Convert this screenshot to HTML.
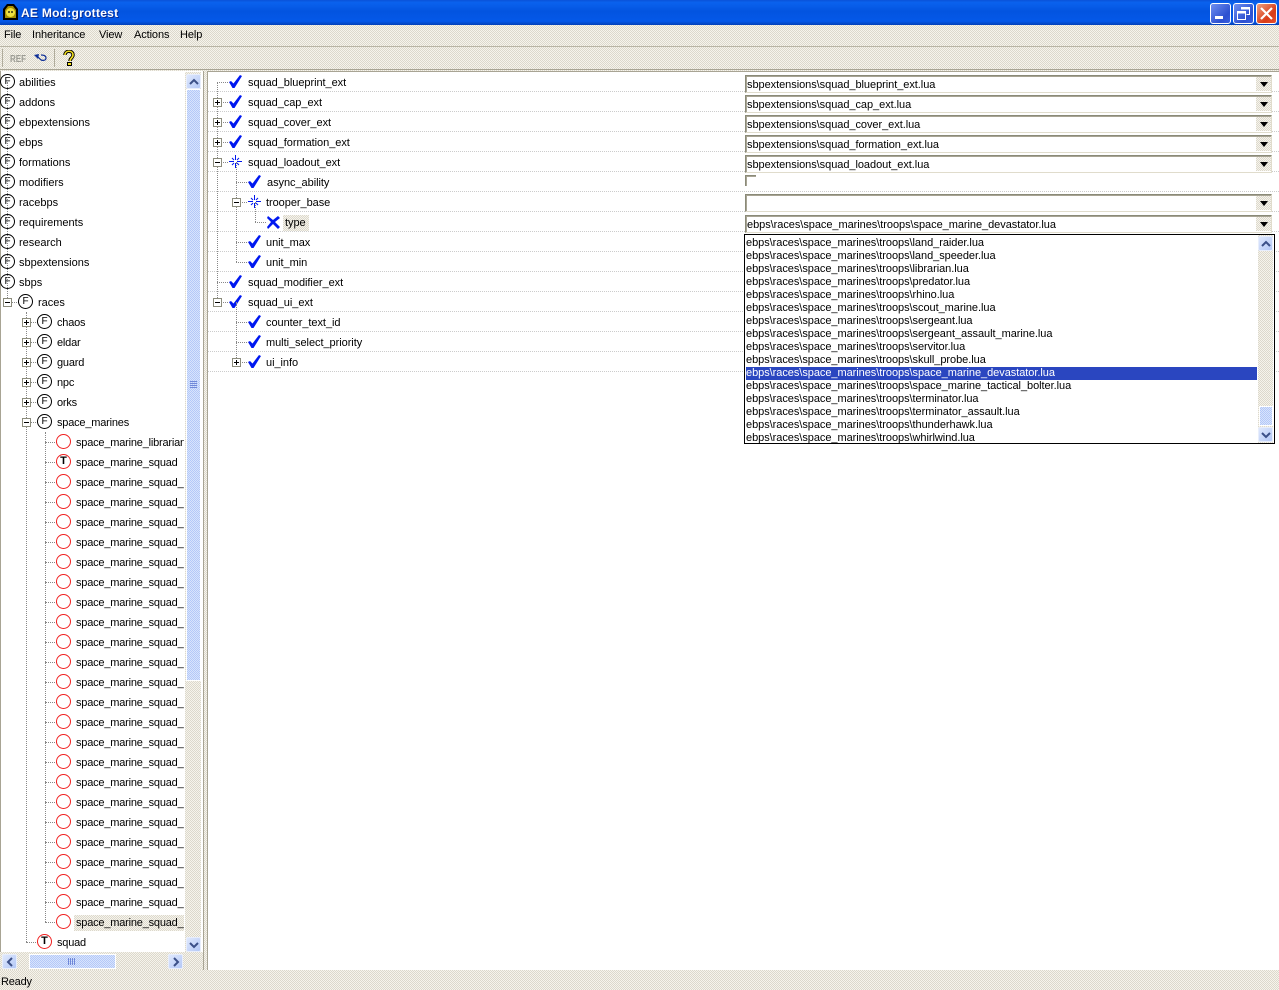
<!DOCTYPE html>
<html><head><meta charset="utf-8"><title>AE Mod:grottest</title>
<style>
html,body{margin:0;padding:0}
body{position:relative;width:1279px;height:990px;overflow:hidden;font:11px/13px "Liberation Sans",sans-serif;color:#000;background:#ece9d8}
.dith{background:repeating-conic-gradient(#dcd8cc 0 25%,#f6f4ec 0 50%) 0 0/2px 2px}
.a{position:absolute}
#title{left:0;top:0;width:1279px;height:25px;background:linear-gradient(#0a52d8 0,#0a62ee 10%,#0354e0 45%,#0458e8 85%,#0340b8 100%)}
#ttext{left:21px;top:6px;color:#fff;font:bold 12px/15px "Liberation Sans",sans-serif;letter-spacing:.27px;text-shadow:1px 1px 0 #0a2a90;white-space:nowrap}
.wb{top:3px;width:19px;height:19px;border:1px solid #fff;border-radius:3px;background:linear-gradient(135deg,#6f8ff0,#2c50d0 70%,#3a5fe0)}
.wb svg{position:absolute;left:0;top:0}
#menu span{position:absolute;top:29px;white-space:nowrap;line-height:13px;letter-spacing:-.1px}
.r{position:relative;height:20px;white-space:nowrap}
.r span{position:absolute;top:4px;line-height:14px}
.r i{position:absolute;top:2px;width:13px;height:13px;border:1px solid #000;border-radius:50%;background:#fff;font:normal 10px/13px "Liberation Sans",sans-serif;text-align:center}
.r i.o{border-color:#f02020}
.r i.t{border-color:#f02020;font-weight:bold;font-size:11px}
.r u{position:absolute;top:6px;width:7px;height:7px;border:1px solid #8c8c7c;background:#fff;text-decoration:none;z-index:2}
.r u:before{content:"";position:absolute;left:1px;top:3px;width:5px;height:1px;background:#000}
.r u.p:after{content:"";position:absolute;left:3px;top:1px;width:1px;height:5px;background:#000}
.r em{position:absolute;top:10px;height:0;border-top:1px dotted #888}
.v{position:absolute;width:0;border-left:1px dotted #888;z-index:1}
.l0 i{left:0}.l0 span{left:19px}
.l1 i{left:18px}.l1 span{left:38px}.l1 u{left:3px}.l1 em{left:7px;width:12px}
.l2 i{left:37px}.l2 span{left:57px;letter-spacing:-.2px}.l2 u{left:22px}.l2 em{left:26px;width:12px}
.l3 i{left:56px}.l3 span{left:76px;letter-spacing:-.2px}.l3 em{left:45px;width:12px}
.sel{background:repeating-conic-gradient(#dcd8cc 0 25%,#f6f4ec 0 50%) 0 0/2px 2px;padding:1px 3px 1px 2px;margin:-1px 0 0 -2px}
#rt .r{height:20px}
#rt .r:after{content:"";position:absolute;left:0;right:0;top:19px;border-top:1px dotted #ccc}
#rt svg{position:absolute;top:2px}
#rt .r span{top:4px;letter-spacing:-.05px}
.cb{position:absolute;left:745px;width:525px;height:16px;border:1px solid;border-color:#8a8a78 #e0dccc #e0dccc #8a8a78;box-shadow:inset 1px 1px 0 #a8a494;background:#fff}
.cb span{position:absolute;left:1px;top:3px;white-space:nowrap;line-height:13px;letter-spacing:-.05px}
.cb b{position:absolute;right:0;top:1px;width:15px;height:14px;background:repeating-conic-gradient(#dcd8cc 0 25%,#f6f4ec 0 50%) 0 0/2px 2px}
.cb b:after{content:"";position:absolute;left:4px;top:5px;border:4px solid transparent;border-top:5px solid #000;border-bottom:0}
#dd div{position:absolute;left:1px;width:511px;height:13px;line-height:13px;top:0;white-space:nowrap;letter-spacing:-.05px}
.sb{background:repeating-conic-gradient(#b4c8f8 0 25%,#d8e4fc 0 50%) 0 0/2px 2px;border:1px solid #fff;box-sizing:border-box}
.btn{background:linear-gradient(135deg,#dfe8fd,#b4c8f6);box-sizing:border-box;border:1px solid #e8eefc;border-radius:2px}
.btn svg{position:absolute;left:0;top:0}
</style></head><body>
<div class="a dith" style="left:0;top:25px;width:1279px;height:965px"></div>

<div id="title" class="a"></div>
<svg class="a" style="left:2px;top:3px" width="17" height="18" viewBox="0 0 17 18"><path d="M1 17V6L5 1h7l4 5v11z" fill="#000"/><path d="M3 15V7l3-4h5l3 4v8z" fill="#a89000"/><circle cx="8.500" cy="9.500" r="4.500" fill="#f0e040"/><circle cx="7" cy="9" r=".9" fill="#000"/><circle cx="10" cy="9" r=".9" fill="#000"/></svg>
<div id="ttext" class="a">AE Mod:grottest</div>
<div class="a wb" style="left:1210px"><svg width="19" height="19"><rect x="4" y="12" width="8" height="3" fill="#fff"/></svg></div>
<div class="a wb" style="left:1233px"><svg width="19" height="19" fill="none" stroke="#fff" stroke-width="1"><path d="M7.500 5.500V3.500h8v7h-3"/><path d="M7.500 4.500h8" stroke-width="2"/><rect x="3.500" y="7.500" width="8" height="8"/><path d="M3.500 8.500h8" stroke-width="2"/></svg></div>
<div class="a wb" style="left:1256px;background:linear-gradient(135deg,#f0a080,#d83c18 65%,#e85030)"><svg width="19" height="19" stroke="#fff" stroke-width="2.200"><path d="M4 4l11 11M15 4L4 15"/></svg></div>

<div id="menu">
<span style="left:4px">File</span><span style="left:32px">Inheritance</span><span style="left:99px">View</span><span style="left:134px">Actions</span><span style="left:180px">Help</span>
</div>
<div class="a" style="left:0;top:46px;width:1279px;height:1px;background:#b8b4a4"></div>
<div class="a" style="left:2px;top:49px;width:1px;height:18px;background:#b0ac9c"></div>
<div class="a" style="left:10px;top:53px;font:bold 10px/13px 'Liberation Sans',sans-serif;color:#9c9c94;transform:scaleX(.8);transform-origin:0 0">REF</div>
<svg class="a" style="left:33px;top:52px" width="15" height="13" fill="none"><path d="M1 3l5-1-1 5z" fill="#103098"/><path d="M4 4l4 4M8 3c3 0 5 1 5 3s-2 3-5 2" stroke="#103098" stroke-width="1.200"/></svg>
<div class="a" style="left:54px;top:49px;width:1px;height:18px;background:#b0ac9c"></div>
<svg class="a" style="left:62px;top:50px" width="14" height="16"><path d="M3 5c0-5 8-5 8 0 0 3-3 3-3 6" fill="none" stroke="#000" stroke-width="3.400"/><path d="M3 5c0-5 8-5 8 0 0 3-3 3-3 6" fill="none" stroke="#f4e020" stroke-width="1.600"/><rect x="5.500" y="12.500" width="4" height="3" fill="#f4e020" stroke="#000"/></svg>
<div class="a" style="left:0;top:69px;width:1279px;height:1px;background:#a8a494"></div>

<!-- left panel -->
<div class="a" style="left:0;top:71px;width:204px;height:899px;background:#fff;border-left:1px solid #a8a494;box-sizing:border-box"></div>
<div class="a" style="left:203px;top:71px;width:1px;height:899px;background:#a8a494"></div>
<div id="lt" class="a" style="left:0;top:72px;width:184px;height:880px;overflow:hidden">
<div class="v" style="left:7px;top:10px;height:220px"></div>
<div class="v" style="left:26px;top:240px;height:630px"></div>
<div class="v" style="left:45px;top:360px;height:490px"></div>
<div class="r l0"><i>F</i><span>abilities</span></div>
<div class="r l0"><i>F</i><span>addons</span></div>
<div class="r l0"><i>F</i><span>ebpextensions</span></div>
<div class="r l0"><i>F</i><span>ebps</span></div>
<div class="r l0"><i>F</i><span>formations</span></div>
<div class="r l0"><i>F</i><span>modifiers</span></div>
<div class="r l0"><i>F</i><span>racebps</span></div>
<div class="r l0"><i>F</i><span>requirements</span></div>
<div class="r l0"><i>F</i><span>research</span></div>
<div class="r l0"><i>F</i><span>sbpextensions</span></div>
<div class="r l0"><i>F</i><span>sbps</span></div>
<div class="r l1"><u></u><em></em><i>F</i><span>races</span></div>
<div class="r l2"><u class="p"></u><em></em><i>F</i><span>chaos</span></div>
<div class="r l2"><u class="p"></u><em></em><i>F</i><span>eldar</span></div>
<div class="r l2"><u class="p"></u><em></em><i>F</i><span>guard</span></div>
<div class="r l2"><u class="p"></u><em></em><i>F</i><span>npc</span></div>
<div class="r l2"><u class="p"></u><em></em><i>F</i><span>orks</span></div>
<div class="r l2"><u></u><em></em><i>F</i><span>space_marines</span></div>
<div class="r l3"><em></em><i class="o"></i><span>space_marine_librarian</span></div>
<div class="r l3"><em></em><i class="t">T</i><span>space_marine_squad</span></div>
<div class="r l3"><em></em><i class="o"></i><span>space_marine_squad_</span></div>
<div class="r l3"><em></em><i class="o"></i><span>space_marine_squad_</span></div>
<div class="r l3"><em></em><i class="o"></i><span>space_marine_squad_</span></div>
<div class="r l3"><em></em><i class="o"></i><span>space_marine_squad_</span></div>
<div class="r l3"><em></em><i class="o"></i><span>space_marine_squad_</span></div>
<div class="r l3"><em></em><i class="o"></i><span>space_marine_squad_</span></div>
<div class="r l3"><em></em><i class="o"></i><span>space_marine_squad_</span></div>
<div class="r l3"><em></em><i class="o"></i><span>space_marine_squad_</span></div>
<div class="r l3"><em></em><i class="o"></i><span>space_marine_squad_</span></div>
<div class="r l3"><em></em><i class="o"></i><span>space_marine_squad_</span></div>
<div class="r l3"><em></em><i class="o"></i><span>space_marine_squad_</span></div>
<div class="r l3"><em></em><i class="o"></i><span>space_marine_squad_</span></div>
<div class="r l3"><em></em><i class="o"></i><span>space_marine_squad_</span></div>
<div class="r l3"><em></em><i class="o"></i><span>space_marine_squad_</span></div>
<div class="r l3"><em></em><i class="o"></i><span>space_marine_squad_</span></div>
<div class="r l3"><em></em><i class="o"></i><span>space_marine_squad_</span></div>
<div class="r l3"><em></em><i class="o"></i><span>space_marine_squad_</span></div>
<div class="r l3"><em></em><i class="o"></i><span>space_marine_squad_</span></div>
<div class="r l3"><em></em><i class="o"></i><span>space_marine_squad_</span></div>
<div class="r l3"><em></em><i class="o"></i><span>space_marine_squad_</span></div>
<div class="r l3"><em></em><i class="o"></i><span>space_marine_squad_</span></div>
<div class="r l3"><em></em><i class="o"></i><span>space_marine_squad_</span></div>
<div class="r l3"><em></em><i class="o"></i><span class="sel" style="left:76px;padding-right:12px">space_marine_squad_</span></div>
<div class="r l2"><em></em><i class="t">T</i><span>squad</span></div>
</div>
<!-- left vscroll -->
<div class="a dith" style="left:185px;top:72px;width:16px;height:882px"></div>
<div class="a sb" style="left:186px;top:89px;width:15px;height:592px"></div>
<svg class="a" style="left:189px;top:381px" width="9" height="8" stroke="#7088d8"><path d="M1 .5h7M1 2.500h7M1 4.500h7M1 6.500h7"/></svg>
<div class="a btn" style="left:186px;top:74px;width:15px;height:15px"><svg width="15" height="15" fill="none" stroke="#3c5088" stroke-width="2"><path d="M3 9l4-4 4 4"/></svg></div>
<div class="a btn" style="left:186px;top:937px;width:15px;height:15px"><svg width="15" height="15" fill="none" stroke="#3c5088" stroke-width="2"><path d="M3 5l4 4 4-4"/></svg></div>
<!-- left hscroll -->
<div class="a dith" style="left:0;top:952px;width:203px;height:18px"></div>
<div class="a btn" style="left:2px;top:954px;width:15px;height:15px"><svg width="15" height="15" fill="none" stroke="#3c5088" stroke-width="2"><path d="M9 3L5 7l4 4"/></svg></div>
<div class="a sb" style="left:29px;top:954px;width:87px;height:15px"></div>
<svg class="a" style="left:68px;top:957px" width="8" height="9" stroke="#7088d8"><path d="M.5 1v7M2.500 1v7M4.500 1v7M6.500 1v7"/></svg>
<div class="a btn" style="left:168px;top:954px;width:15px;height:15px"><svg width="15" height="15" fill="none" stroke="#3c5088" stroke-width="2"><path d="M5 3l4 4-4 4"/></svg></div>

<!-- right panel -->
<div class="a" style="left:207px;top:71px;width:1072px;height:899px;background:#fff;border-top:1px solid #a8a494;border-left:1px solid #a8a494;box-sizing:border-box"></div>
<div id="rt" class="a" style="left:208px;top:72px;width:1071px;height:300px;overflow:hidden">
<div class="v" style="left:9px;top:10px;height:220px"></div>
<div class="v" style="left:28px;top:90px;height:100px"></div>
<div class="v" style="left:47px;top:130px;height:20px"></div>
<div class="v" style="left:28px;top:230px;height:60px"></div>
<div class="r"><em style="left:9px;width:11px"></em><svg style="left:20px" width="16" height="16"><path d="M1 8l2-1 2.500 2.500L12 1l2 1-7.500 12h-2z" fill="#0018f0"/></svg><span style="left:40px">squad_blueprint_ext</span></div>
<div class="r"><u class="p" style="left:5px"></u><em style="left:9px;width:11px"></em><svg style="left:20px" width="16" height="16"><path d="M1 8l2-1 2.500 2.500L12 1l2 1-7.500 12h-2z" fill="#0018f0"/></svg><span style="left:40px">squad_cap_ext</span></div>
<div class="r"><u class="p" style="left:5px"></u><em style="left:9px;width:11px"></em><svg style="left:20px" width="16" height="16"><path d="M1 8l2-1 2.500 2.500L12 1l2 1-7.500 12h-2z" fill="#0018f0"/></svg><span style="left:40px">squad_cover_ext</span></div>
<div class="r"><u class="p" style="left:5px"></u><em style="left:9px;width:11px"></em><svg style="left:20px" width="16" height="16"><path d="M1 8l2-1 2.500 2.500L12 1l2 1-7.500 12h-2z" fill="#0018f0"/></svg><span style="left:40px">squad_formation_ext</span></div>
<div class="r"><u style="left:5px"></u><em style="left:9px;width:11px"></em><svg style="left:20px" width="16" height="16" stroke="#0018f0"><path d="M7.500 1v5M7.500 9v5M1 7.500h5M9 7.500h5M4 4l2 2M11 4L9 6M4 11l2-2M11 11L9 9"/></svg><span style="left:40px">squad_loadout_ext</span></div>
<div class="r"><em style="left:28px;width:11px"></em><svg style="left:39px" width="16" height="16"><path d="M1 8l2-1 2.500 2.500L12 1l2 1-7.500 12h-2z" fill="#0018f0"/></svg><span style="left:59px">async_ability</span></div>
<div class="r"><u style="left:24px"></u><em style="left:28px;width:11px"></em><svg style="left:39px" width="16" height="16" stroke="#0018f0"><path d="M7.500 1v5M7.500 9v5M1 7.500h5M9 7.500h5M4 4l2 2M11 4L9 6M4 11l2-2M11 11L9 9"/></svg><span style="left:58px">trooper_base</span></div>
<div class="r"><em style="left:47px;width:11px"></em><svg style="left:58px" width="16" height="16"><path d="M2 2l5 4 5-4 2 2-5 4 5 5-2 2-5-5-5 5-1-2 4-5-4-4z" fill="#0018f0"/></svg><span class="sel" style="left:77px">type</span></div>
<div class="r"><em style="left:28px;width:11px"></em><svg style="left:39px" width="16" height="16"><path d="M1 8l2-1 2.500 2.500L12 1l2 1-7.500 12h-2z" fill="#0018f0"/></svg><span style="left:58px">unit_max</span></div>
<div class="r"><em style="left:28px;width:11px"></em><svg style="left:39px" width="16" height="16"><path d="M1 8l2-1 2.500 2.500L12 1l2 1-7.500 12h-2z" fill="#0018f0"/></svg><span style="left:58px">unit_min</span></div>
<div class="r"><em style="left:9px;width:11px"></em><svg style="left:20px" width="16" height="16"><path d="M1 8l2-1 2.500 2.500L12 1l2 1-7.500 12h-2z" fill="#0018f0"/></svg><span style="left:40px">squad_modifier_ext</span></div>
<div class="r"><u style="left:5px"></u><em style="left:9px;width:11px"></em><svg style="left:20px" width="16" height="16"><path d="M1 8l2-1 2.500 2.500L12 1l2 1-7.500 12h-2z" fill="#0018f0"/></svg><span style="left:40px">squad_ui_ext</span></div>
<div class="r"><em style="left:28px;width:11px"></em><svg style="left:39px" width="16" height="16"><path d="M1 8l2-1 2.500 2.500L12 1l2 1-7.500 12h-2z" fill="#0018f0"/></svg><span style="left:58px">counter_text_id</span></div>
<div class="r"><em style="left:28px;width:11px"></em><svg style="left:39px" width="16" height="16"><path d="M1 8l2-1 2.500 2.500L12 1l2 1-7.500 12h-2z" fill="#0018f0"/></svg><span style="left:58px">multi_select_priority</span></div>
<div class="r"><u class="p" style="left:24px"></u><em style="left:28px;width:11px"></em><svg style="left:39px" width="16" height="16"><path d="M1 8l2-1 2.500 2.500L12 1l2 1-7.500 12h-2z" fill="#0018f0"/></svg><span style="left:58px">ui_info</span></div>
</div>

<!-- combos -->
<div class="cb" style="top:75px"><span>sbpextensions\squad_blueprint_ext.lua</span><b></b></div>
<div class="cb" style="top:95px"><span>sbpextensions\squad_cap_ext.lua</span><b></b></div>
<div class="cb" style="top:115px"><span>sbpextensions\squad_cover_ext.lua</span><b></b></div>
<div class="cb" style="top:135px"><span>sbpextensions\squad_formation_ext.lua</span><b></b></div>
<div class="cb" style="top:155px"><span>sbpextensions\squad_loadout_ext.lua</span><b></b></div>
<div class="a" style="left:745px;top:175px;width:10px;height:10px;border-left:1px solid #8a8a78;border-top:1px solid #8a8a78;box-shadow:inset 1px 1px 0 #a8a494"></div>
<div class="cb" style="top:194px"><b></b></div>
<div class="cb" style="top:215px"><span>ebps\races\space_marines\troops\space_marine_devastator.lua</span><b></b></div>

<!-- dropdown -->
<div id="dd" class="a" style="left:744px;top:234px;width:529px;height:208px;border:1px solid #000;background:#fff;overflow:hidden">
<div style="top:2px">ebps\races\space_marines\troops\land_raider.lua</div>
<div style="top:15px">ebps\races\space_marines\troops\land_speeder.lua</div>
<div style="top:28px">ebps\races\space_marines\troops\librarian.lua</div>
<div style="top:41px">ebps\races\space_marines\troops\predator.lua</div>
<div style="top:54px">ebps\races\space_marines\troops\rhino.lua</div>
<div style="top:67px">ebps\races\space_marines\troops\scout_marine.lua</div>
<div style="top:80px">ebps\races\space_marines\troops\sergeant.lua</div>
<div style="top:93px">ebps\races\space_marines\troops\sergeant_assault_marine.lua</div>
<div style="top:106px">ebps\races\space_marines\troops\servitor.lua</div>
<div style="top:119px">ebps\races\space_marines\troops\skull_probe.lua</div>
<div style="top:132px;background:#2a46c0;color:#fff">ebps\races\space_marines\troops\space_marine_devastator.lua</div>
<div style="top:145px">ebps\races\space_marines\troops\space_marine_tactical_bolter.lua</div>
<div style="top:158px">ebps\races\space_marines\troops\terminator.lua</div>
<div style="top:171px">ebps\races\space_marines\troops\terminator_assault.lua</div>
<div style="top:184px">ebps\races\space_marines\troops\thunderhawk.lua</div>
<div style="top:197px">ebps\races\space_marines\troops\whirlwind.lua</div>
<div class="dith" style="left:513px;top:0;width:15px;height:208px"></div>
</div>
<div class="a btn" style="left:1258px;top:236px;width:15px;height:15px"><svg width="15" height="15" fill="none" stroke="#3c5088" stroke-width="2"><path d="M3 9l4-4 4 4"/></svg></div>
<div class="a sb" style="left:1259px;top:406px;width:14px;height:20px"></div>
<div class="a btn" style="left:1258px;top:427px;width:15px;height:15px"><svg width="15" height="15" fill="none" stroke="#3c5088" stroke-width="2"><path d="M3 5l4 4 4-4"/></svg></div>

<div class="a" style="left:1px;top:976px;line-height:13px;letter-spacing:-.2px">Ready</div>
</body></html>
